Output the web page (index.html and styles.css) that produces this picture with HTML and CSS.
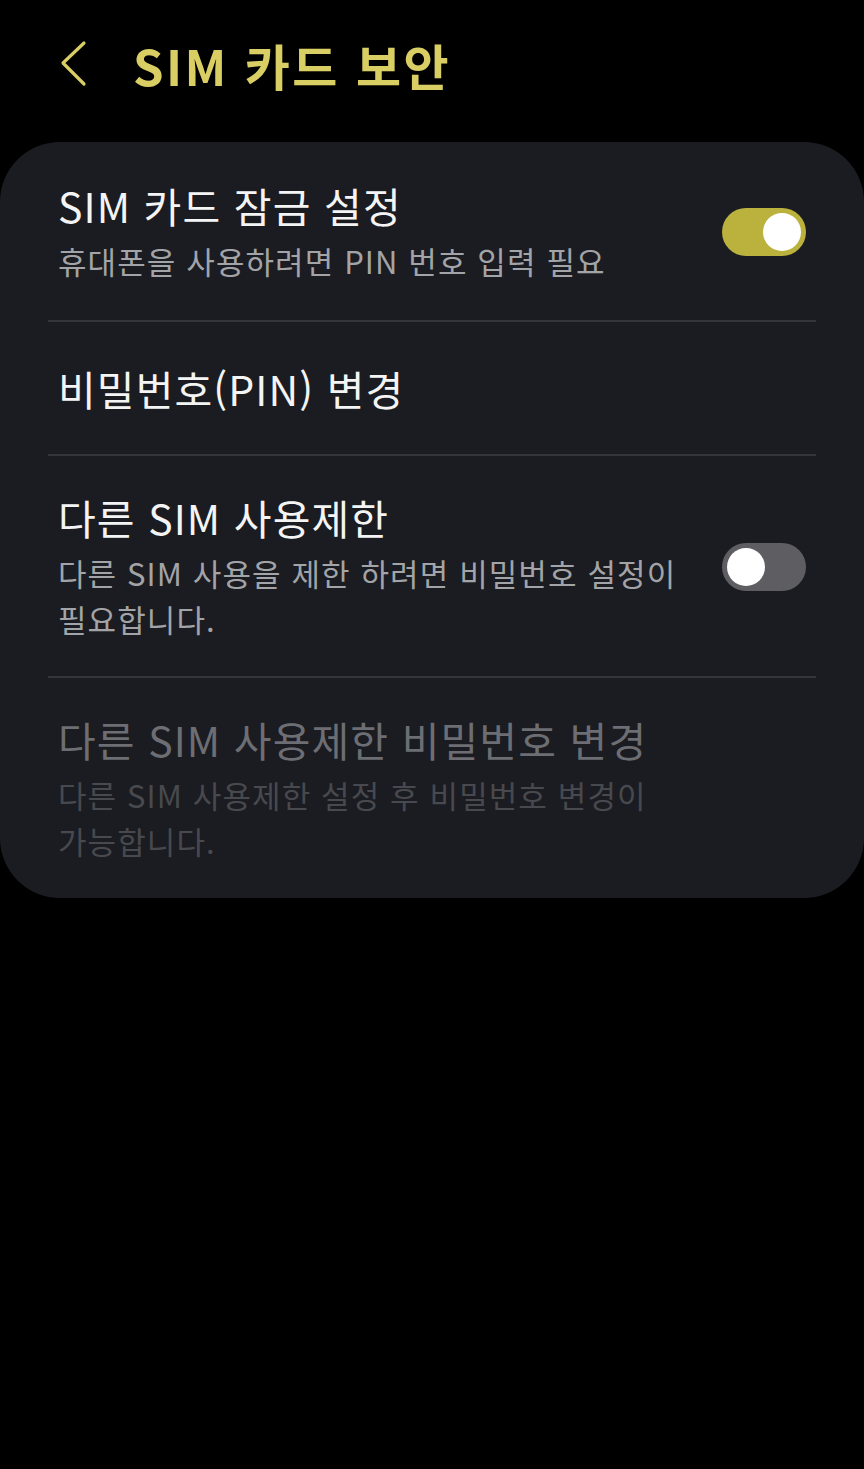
FILE: index.html
```html
<!DOCTYPE html>
<html lang="ko">
<head>
<meta charset="utf-8">
<title>SIM 카드 보안</title>
<link rel="stylesheet" href="styles.css">
</head>
<body>
<header class="header">
  <button class="back" aria-label="뒤로">
    <svg width="30" height="50" viewBox="0 0 30 50"><polyline points="24,3 3,23 24,44" fill="none" stroke="#d9ce64" stroke-width="3.2" stroke-linecap="round" stroke-linejoin="round"/></svg>
  </button>
  <h1 class="title">SIM 카드 보안</h1>
</header>
<main class="card">
  <div class="item">
    <div class="text">
      <div class="item-title">SIM 카드 잠금 설정</div>
      <div class="item-sub">휴대폰을 사용하려면 PIN 번호 입력 필요</div>
    </div>
    <div class="switch on"><span class="knob"></span></div>
  </div>
  <div class="item single">
    <div class="text">
      <div class="item-title">비밀번호(PIN) 변경</div>
    </div>
  </div>
  <div class="item">
    <div class="text">
      <div class="item-title">다른 SIM 사용제한</div>
      <div class="item-sub">다른 SIM 사용을 제한 하려면 비밀번호 설정이<br>필요합니다.</div>
    </div>
    <div class="switch off"><span class="knob"></span></div>
  </div>
  <div class="item disabled">
    <div class="text">
      <div class="item-title">다른 SIM 사용제한 비밀번호 변경</div>
      <div class="item-sub">다른 SIM 사용제한 설정 후 비밀번호 변경이<br>가능합니다.</div>
    </div>
  </div>
</main>
</body>
</html>
```

FILE: styles.css
```css
* { box-sizing: border-box; }
html, body { margin: 0; padding: 0; background: #000; }
body {
  width: 864px;
  height: 1469px;
  font-family: "Noto Sans CJK KR", "Noto Sans", sans-serif;
  color: #f4f4f4;
  overflow: hidden;
}
.header {
  height: 142px;
  display: flex;
  align-items: center;
  padding: 0 0 12px 60px;
}
.back {
  background: none;
  border: 0;
  padding: 0;
  width: 30px;
  height: 50px;
  display: flex;
  align-items: center;
}
.title {
  margin: 0 0 0 43px;
  font-size: 49px;
  font-weight: 700;
  color: #d9ce64;
  letter-spacing: 2.4px;
  line-height: 60px;
}
.card {
  background: #1a1c21;
  border-radius: 60px;
  padding: 0 48px;
  height: 756px;
}
.item {
  display: flex;
  align-items: center;
  padding: 36px 10px 34px 10px;
  border-top: 2px solid #33353a;
}
.item:first-child { border-top: 0; padding-top: 38px; padding-bottom: 36px; }
.item.single { padding: 41px 10px 41px 10px; }
.text { flex: 1; min-width: 0; }
.item-title {
  font-size: 41px;
  line-height: 50px;
  font-weight: 400;
  letter-spacing: 1.1px;
}
.item-sub {
  margin-top: 8px;
  font-size: 31px;
  line-height: 46px;
  color: #a3a4a8;
  letter-spacing: 1.1px;
}
.disabled .item-title { color: #6d6e73; }
.disabled .item-sub { color: #48494e; }
.switch {
  width: 84px;
  height: 48px;
  border-radius: 24px;
  padding: 5px;
  display: flex;
  flex-shrink: 0;
}
.switch.on { background: #bab23d; justify-content: flex-end; }
.switch.off { background: #5e5e62; justify-content: flex-start; }
.knob {
  width: 38px;
  height: 38px;
  border-radius: 50%;
  background: #fff;
}
```
